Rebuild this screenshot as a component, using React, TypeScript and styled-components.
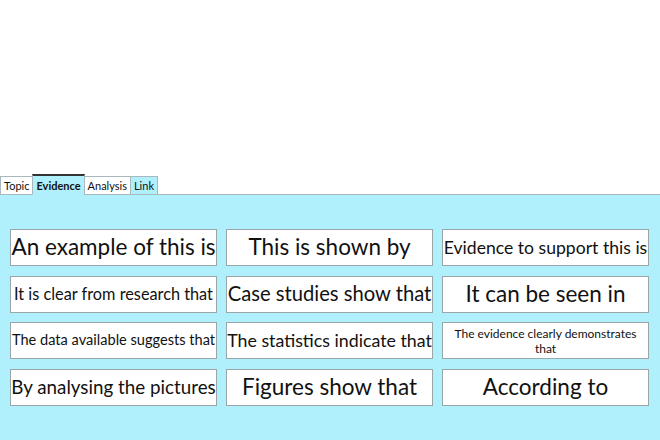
import styled, { createGlobalStyle } from "styled-components";

const GlobalStyle = createGlobalStyle`
  html, body {
    margin: 0;
    padding: 0;
    background: #ffffff;
    font-family: Lato, "Open Sans", sans-serif;
  }
`;

const Page = styled.div`
  width: 660px;
  height: 440px;
  display: flex;
  flex-direction: column;
  overflow: hidden;
`;

const TopSpace = styled.div`
  height: 174px;
`;

const TabBar = styled.div`
  display: flex;
  align-items: flex-end;
  height: 21px;
  position: relative;
  z-index: 1;
  margin-bottom: -1px;
`;

const Tab = styled.div<{ $active?: boolean; $tint?: boolean }>`
  height: ${p => (p.$active ? "21px" : "19px")};
  box-sizing: border-box;
  padding: 0 3px;
  display: flex;
  align-items: center;
  font-family: Lato, sans-serif;
  font-size: 11px;
  font-weight: ${p => (p.$active ? 700 : 400)};
  color: #111;
  background: ${p => (p.$active || p.$tint ? "#b0f0fc" : "#ffffff")};
  border: 1px solid #a8b8bc;
  border-top: ${p => (p.$active ? "2px solid #333" : "1px solid #a8b8bc")};
  border-bottom: ${p => (p.$active ? "1px solid #b0f0fc" : "1px solid #a8b8bc")};
  margin-right: -1px;
`;

const Panel = styled.div`
  flex: 1;
  background: #b0f0fc;
  border-top: 1px solid #a8b8bc;
  padding: 34px 0 0 10px;
`;

const Grid = styled.div`
  display: grid;
  grid-template-columns: repeat(3, 207px);
  grid-auto-rows: 37px;
  column-gap: 9px;
  row-gap: 9.5px;
`;

const Card = styled.div<{ $size: number }>`
  background: #ffffff;
  border: 1px solid #9aa6a8;
  box-sizing: border-box;
  display: flex;
  align-items: center;
  justify-content: center;
  text-align: center;
  padding: 0 2px;
  font-size: ${p => p.$size}px;
  line-height: 1.25;
  color: #111;
  white-space: ${p => (p.$size < 13 ? "normal" : "nowrap")};
  overflow: hidden;
`;

const phrases: { text: string; size: number }[] = [
  { text: "An example of this is", size: 22.5 },
  { text: "This is shown by", size: 22.5 },
  { text: "Evidence to support this is", size: 17.6 },
  { text: "It is clear from research that", size: 16.3 },
  { text: "Case studies show that", size: 20.2 },
  { text: "It can be seen in", size: 22.5 },
  { text: "The data available suggests that", size: 14.6 },
  { text: "The statistics indicate that", size: 17.8 },
  { text: "The evidence clearly demonstrates that", size: 12 },
  { text: "By analysing the pictures", size: 18.8 },
  { text: "Figures show that", size: 22.5 },
  { text: "According to", size: 22.5 },
];

export default function App() {
  return (
    <Page>
      <GlobalStyle />
      <TopSpace />
      <TabBar>
        <Tab>Topic</Tab>
        <Tab $active>Evidence</Tab>
        <Tab>Analysis</Tab>
        <Tab $tint>Link</Tab>
      </TabBar>
      <Panel>
        <Grid>
          {phrases.map(p => (
            <Card key={p.text} $size={p.size}>
              {p.text}
            </Card>
          ))}
        </Grid>
      </Panel>
    </Page>
  );
}
